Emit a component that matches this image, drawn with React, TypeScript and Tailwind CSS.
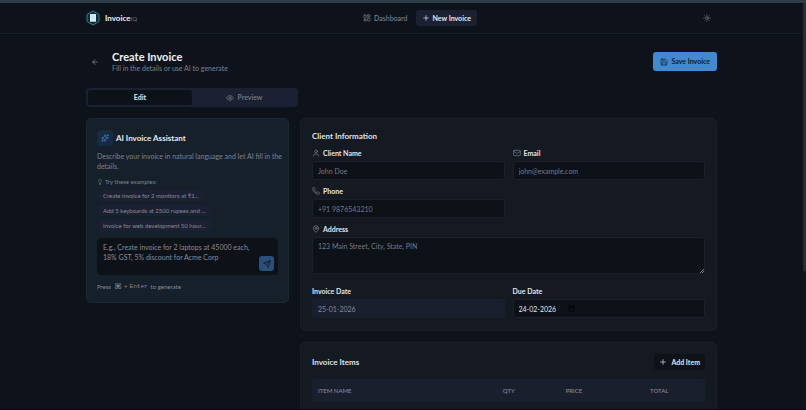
import { FC, ReactNode } from "react";
import {
  ArrowLeft,
  Calendar,
  Eye,
  LayoutDashboard,
  Lightbulb,
  Mail,
  MapPin,
  Phone,
  Plus,
  Save,
  Send,
  Sparkles,
  Sun,
  User,
} from "lucide-react";

const EXAMPLES = [
  "Create invoice for 2 monitors at ₹1...",
  "Add 5 keyboards at 2500 rupees and ...",
  "Invoice for web development 50 hour...",
];

const FIELD =
  "block w-full rounded-[3px] border border-[#1b202b] bg-[#0d1118] px-[5px] text-[7px] leading-[10px] text-[#e4e7ec] placeholder:text-[#747a86] outline-none";

const Logo: FC = () => (
  <svg width="14" height="16" viewBox="0 0 28 32" fill="none" aria-hidden="true">
    <path d="M14 2 26 9v14l-12 7L2 23V9z" fill="#0f2a36" stroke="#2c7f8f" strokeWidth="2" />
    <path d="M8 8h12v16l-2-1-2 1-2-1-2 1-2-1-2 1z" fill="#d3edf4" />
    <path d="M11 12h6M11 16h6" stroke="#a5cfdc" strokeWidth="1" />
  </svg>
);

interface FieldLabelProps {
  htmlFor: string;
  icon?: ReactNode;
  children: ReactNode;
}

const FieldLabel: FC<FieldLabelProps> = ({ htmlFor, icon, children }) => (
  <label
    htmlFor={htmlFor}
    className="mb-[3px] flex items-center gap-[3px] text-[7px] leading-[10px] font-bold text-[#e2e5ea]"
  >
    {icon}
    {children}
  </label>
);

const Header: FC = () => (
  <header className="border-b border-[#1a202b]">
    <div className="mx-auto flex h-[30px] max-w-[631px] items-center justify-between">
      <a href="#home" className="flex items-center gap-[5px]">
        <Logo />
        <span className="text-[8px] font-bold text-[#eef1f5]">
          Invoice<span className="text-[6px] font-normal text-[#6b7484]">IQ</span>
        </span>
      </a>
      <nav className="flex items-center gap-0.5">
        <a href="#dashboard" className="flex h-4 items-center gap-[3px] px-[6px] text-[7px] font-medium text-[#7b818d]">
          <LayoutDashboard size={8} className="shrink-0" />
          Dashboard
        </a>
        <a
          href="#new"
          className="flex h-4 items-center gap-[3px] rounded-[3px] bg-[#1b2132] px-[6px] text-[7px] font-bold text-[#e6e9ef]"
        >
          <Plus size={8} className="shrink-0" />
          New Invoice
        </a>
      </nav>
      <button aria-label="Toggle theme" className="flex size-5 items-center justify-center text-[#7b818d]">
        <Sun size={8} />
      </button>
    </div>
  </header>
);

const AssistantCard: FC = () => (
  <section className="self-start rounded-[5px] border border-[#1c2833] bg-[#16202b] px-[10px] py-[11px]">
    <div className="flex items-center gap-[3px]">
      <span className="flex size-4 items-center justify-center rounded-[4px] bg-[#182b42] text-[#4389d0]">
        <Sparkles size={8} />
      </span>
      <h2 className="text-[8px] leading-[12px] font-bold text-[#e6e9ef]">AI Invoice Assistant</h2>
    </div>
    <p className="mt-[5px] -mr-2 text-[7px] leading-[10px] text-[#7c838f]">
      Describe your invoice in natural language and let AI fill in the details.
    </p>
    <p className="mt-[7px] flex items-center gap-0.5 text-[6px] leading-[8px] text-[#7c838f]">
      <Lightbulb size={6} />
      Try these examples:
    </p>
    <div className="mt-1 flex flex-col items-start gap-1">
      {EXAMPLES.map((text) => (
        <button
          key={text}
          className="h-[11px] rounded-full bg-[#1b2132] px-[6px] text-[6px] leading-[11px] whitespace-nowrap text-[#868c98]"
        >
          {text}
        </button>
      ))}
    </div>
    <div className="relative mt-[7px]">
      <textarea
        aria-label="Describe your invoice"
        className="block h-[37px] w-full resize-none rounded-[4px] bg-[#0d1118] py-[4px] pr-6 pl-[6px] text-[7px] leading-[10px] text-[#e4e7ec] outline-none placeholder:text-[#868c98]"
        placeholder="E.g., Create invoice for 2 laptops at 45000 each, 18% GST, 5% discount for Acme Corp"
      />
      <button
        aria-label="Send"
        className="absolute right-1 bottom-1 flex size-[15px] items-center justify-center rounded-[3px] bg-[#2a4f78] text-[#0d1118]"
      >
        <Send size={8} />
      </button>
    </div>
    <p className="mt-2 flex items-center gap-[3px] text-[6px] leading-[8px] text-[#868c98]">
      Press
      <kbd className="flex items-center gap-0.5 font-['Liberation_Mono',monospace]">
        <span className="font-['DejaVu_Sans',sans-serif] text-[8px]">⌘</span>
        <span>+</span>
        <span>Enter</span>
      </kbd>
      to generate
    </p>
  </section>
);

const ClientCard: FC = () => (
  <section className="rounded-[5px] border border-[#1a1f29] bg-[#151922] px-[11px] pt-[11px] pb-3">
    <h2 className="text-[8px] leading-[12px] font-bold text-[#dfe2e8]">Client Information</h2>
    <div className="mt-[6px] grid grid-cols-2 gap-x-2 gap-y-[6px]">
      <div>
        <FieldLabel htmlFor="name" icon={<User size={8} className="shrink-0 text-[#7b818d]" />}>
          Client Name
        </FieldLabel>
        <input id="name" className={`${FIELD} h-[19px]`} placeholder="John Doe" />
      </div>
      <div>
        <FieldLabel htmlFor="email" icon={<Mail size={8} className="shrink-0 text-[#7b818d]" />}>
          Email
        </FieldLabel>
        <input id="email" type="email" className={`${FIELD} h-[19px]`} placeholder="john@example.com" />
      </div>
      <div>
        <FieldLabel htmlFor="phone" icon={<Phone size={8} className="shrink-0 text-[#7b818d]" />}>
          Phone
        </FieldLabel>
        <input id="phone" type="tel" className={`${FIELD} h-[19px]`} placeholder="+91 9876543210" />
      </div>
      <div className="col-span-2">
        <FieldLabel htmlFor="address" icon={<MapPin size={8} className="shrink-0 text-[#7b818d]" />}>
          Address
        </FieldLabel>
        <div className="relative">
          <textarea
            id="address"
            className={`${FIELD} h-[37px] resize-none py-[3px]`}
            placeholder="123 Main Street, City, State, PIN"
          />
          <svg className="absolute right-px bottom-px" width="4" height="4" viewBox="0 0 4 4" stroke="#a9adb5" strokeWidth="0.7">
            <path d="M0 4 4 0M2 4l2-2" />
          </svg>
        </div>
      </div>
    </div>
    <div className="mt-3 grid grid-cols-2 gap-x-2">
      <div>
        <FieldLabel htmlFor="invoice-date">Invoice Date</FieldLabel>
        <input
          id="invoice-date"
          className="block h-[19px] w-full rounded-[3px] bg-[#1a1f2d] px-[6px] text-[7px] leading-[10px] text-[#868c98] outline-none"
          defaultValue="25-01-2026"
          readOnly
        />
      </div>
      <div>
        <FieldLabel htmlFor="due-date">Due Date</FieldLabel>
        <div className="relative">
          <input id="due-date" className={`${FIELD} h-[19px]`} defaultValue="24-02-2026" />
          <Calendar size={7} className="absolute top-[6px] left-[55px] text-black" />
        </div>
      </div>
    </div>
  </section>
);

const ItemsCard: FC = () => (
  <section className="rounded-[5px] border border-[#1a1f29] bg-[#151922] p-[11px]">
    <div className="flex items-center justify-between">
      <h2 className="text-[8px] leading-[12px] font-bold text-[#dfe2e8]">Invoice Items</h2>
      <button className="flex h-4 items-center gap-1 rounded-[3px] bg-[#0d1118] px-[5px] text-[7px] font-bold text-[#e2e5ea]">
        <Plus size={8} className="shrink-0" />
        Add Item
      </button>
    </div>
    <table className="mt-[9px] w-full table-fixed text-left text-[6px] text-[#868c98]">
      <thead>
        <tr className="h-[23px] bg-[#1a1f2e]">
          <th className="w-[46%] rounded-l-[2px] px-[6px] font-medium">ITEM NAME</th>
          <th className="w-[16%] px-[10px] font-medium">QTY</th>
          <th className="w-[22%] px-[10px] font-medium">PRICE</th>
          <th className="rounded-r-[2px] px-[8px] font-medium">TOTAL</th>
        </tr>
      </thead>
      <tbody>
        <tr className="h-8">
          <td colSpan={4} />
        </tr>
      </tbody>
    </table>
  </section>
);

export default function App() {
  return (
    <div className="flex h-screen flex-col overflow-hidden border-b border-[#100616] bg-[#0e131b] font-['Lato','Noto_Sans',sans-serif]">
      <div className="h-[3px] shrink-0 bg-[#303b4a]" />
      <div className="flex min-h-0 flex-1">
        <div className="min-w-0 flex-1 overflow-hidden">
          <Header />
          <main className="mx-auto max-w-[631px] pt-4">
            <div className="flex items-center justify-between">
              <div className="flex items-center gap-2">
                <button aria-label="Go back" className="flex w-[18px] items-center justify-center text-[#8b919c]">
                  <ArrowLeft size={8} />
                </button>
                <div>
                  <h1 className="text-[11px] leading-[14px] font-bold text-[#eef1f5]">Create Invoice</h1>
                  <p className="text-[7px] leading-[9px] text-[#7b818d]">Fill in the details or use AI to generate</p>
                </div>
              </div>
              <button className="flex h-[19px] items-center gap-[3px] rounded-[3px] bg-[#4389d0] px-[7px] text-[7px] font-bold text-[#0f1c2c]">
                <Save size={8} className="shrink-0" />
                Save Invoice
              </button>
            </div>

            {/* Edit / preview switch */}
            <div role="tablist" className="mt-[15px] grid h-[19px] w-[212px] grid-cols-2 rounded-[4px] bg-[#1b2132] p-0.5 text-[7px]">
              <button role="tab" aria-selected="true" className="rounded-[3px] bg-[#0d1118] font-bold text-[#e6e9ef]">
                Edit
              </button>
              <button
                role="tab"
                aria-selected="false"
                className="flex items-center justify-center gap-1 font-medium text-[#7b818d]"
              >
                <Eye size={8} className="shrink-0" />
                Preview
              </button>
            </div>

            <div className="mt-[11px] grid grid-cols-3 gap-[11px]">
              <AssistantCard />
              <div className="col-span-2 flex flex-col gap-[11px]">
                <ClientCard />
                <ItemsCard />
              </div>
            </div>
          </main>
        </div>
        {/* Scroll position */}
        <div className="w-[3px] shrink-0 bg-[#11151d]">
          <div className="h-[66%] bg-[#272c35]" />
        </div>
      </div>
    </div>
  );
}
